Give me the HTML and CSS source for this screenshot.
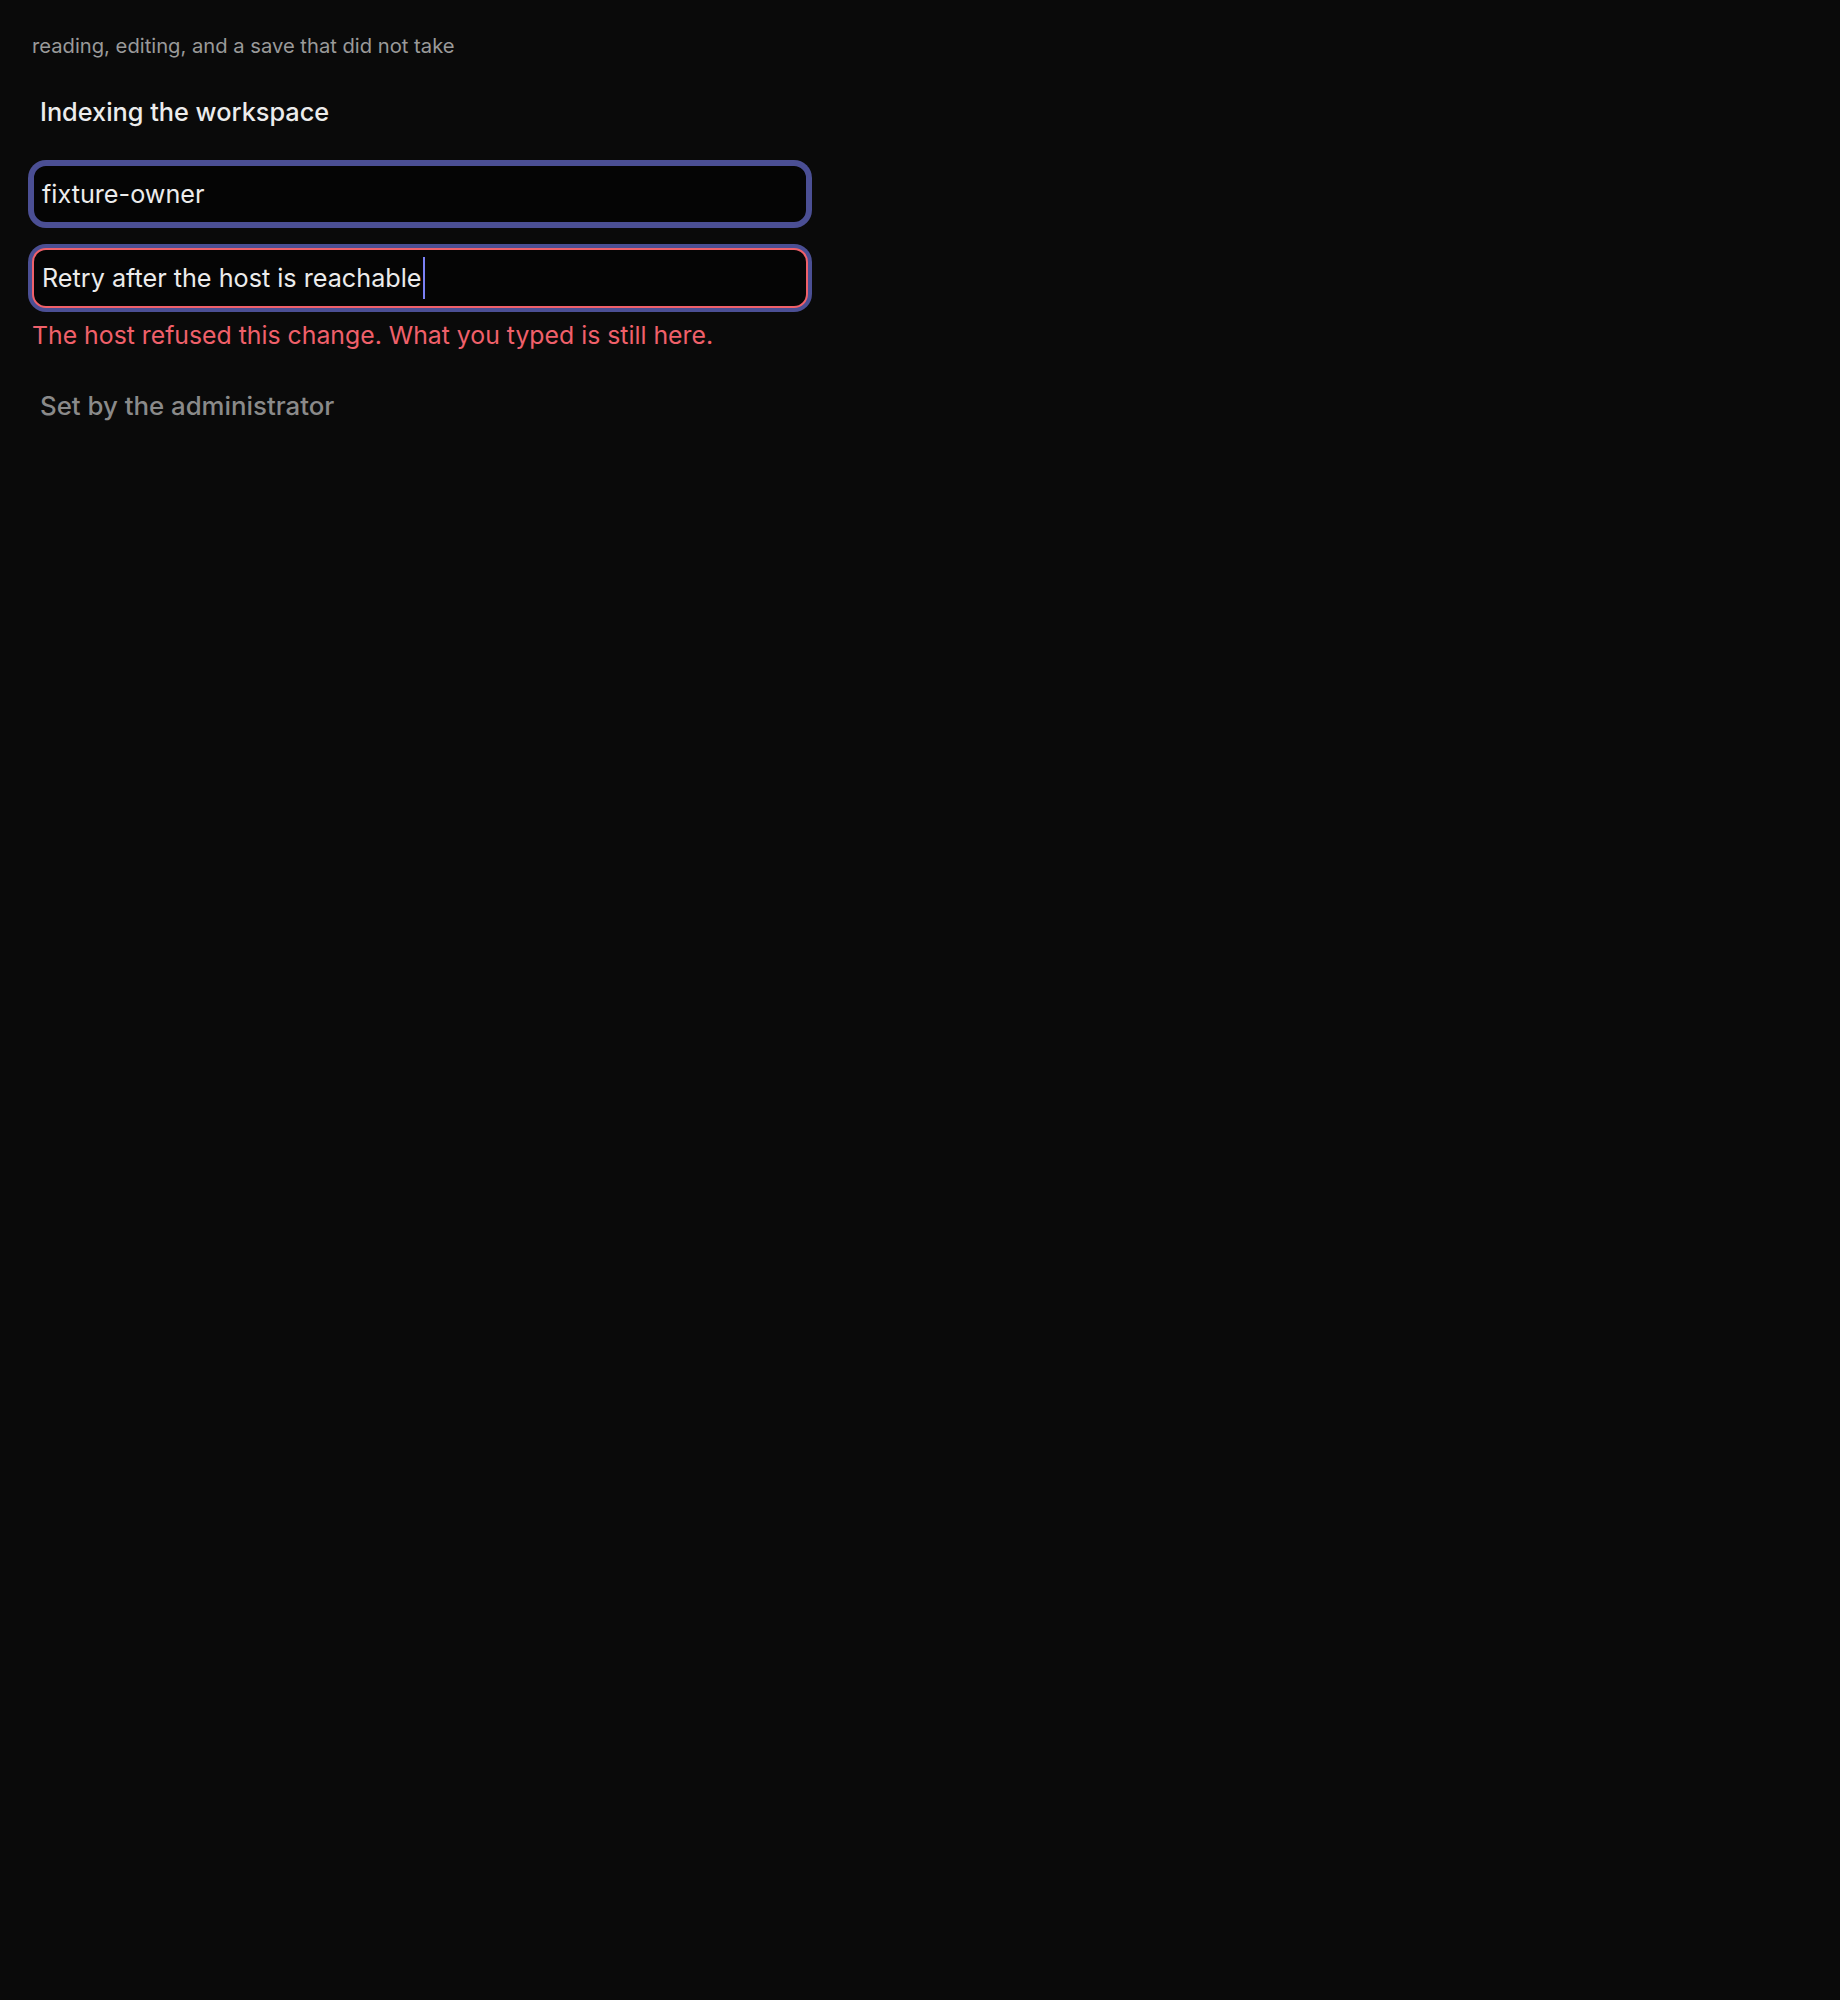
FILE: index.html
```html
<!DOCTYPE html>
<html lang="en">
<head>
<meta charset="utf-8">
<title>Settings field states</title>
<link rel="stylesheet" href="styles.css">
</head>
<body>
<main class="page">
  <p class="caption">reading, editing, and a save that did not take</p>
  <section class="field-group">
    <h2 class="field-label">Indexing the workspace</h2>
    <div class="input input--focus"><span class="input-value">fixture-owner</span></div>
    <div class="input input--focus input--error"><span class="input-value">Retry after the host is reachable</span><span class="caret"></span></div>
    <p class="error-text">The host refused this change. What you typed is still here.</p>
    <p class="locked-label">Set by the administrator</p>
  </section>
</main>
</body>
</html>
```
FILE: styles.css
```css
html, body {
  margin: 0;
  padding: 0;
  background: #0a0a0a;
}
body {
  font-family: Inter, "Noto Sans", sans-serif;
  color: #ececec;
}
.page {
  padding: 32px;
  width: 776px;
}
.caption {
  margin: 0;
  font-size: 20.2px;
  line-height: 28px;
  color: #9a9a9a;
}
.field-group {
  display: flex;
  flex-direction: column;
  margin-top: 35px;
}
.field-label {
  margin: 0 0 35px;
  padding-left: 8px;
  font-size: 25.3px;
  line-height: 34px;
  font-weight: 500;
  color: #ececec;
}
.input {
  box-sizing: border-box;
  height: 60px;
  border: 2px solid #4b4f94;
  border-radius: 14px;
  background: #050505;
  box-shadow: 0 0 0 4px #4b4f94;
  display: flex;
  align-items: center;
  padding: 0 8px;
  font-size: 25.2px;
  color: #ececec;
}
.input + .input {
  margin-top: 24px;
}
.input--error {
  border-color: #f0606a;
}
.input-value {
  white-space: pre;
}
.caret {
  width: 2.5px;
  height: 42px;
  background: #7b80f5;
  margin-left: 1px;
}
.error-text {
  margin: 11px 0 0;
  font-size: 24.8px;
  line-height: 32px;
  color: #f0606a;
}
.locked-label {
  margin: 38px 0 0;
  padding-left: 8px;
  font-size: 25.8px;
  line-height: 34px;
  font-weight: 500;
  color: #8a8a8a;
}
```
